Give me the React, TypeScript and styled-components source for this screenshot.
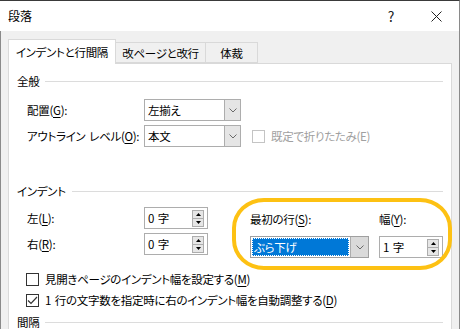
import React from "react";
import styled, { createGlobalStyle } from "styled-components";

const Global = createGlobalStyle`
  html, body { margin: 0; padding: 0; background: #f0f0f0; }
  body {
    font-family: "Noto Sans CJK JP", "Noto Sans", sans-serif;
    font-size: 11.5px;
    letter-spacing: -0.3px;
    word-spacing: 1.5px;
    font-feature-settings: "palt";
    color: #000;
  }
  * { box-sizing: border-box; }
  u { text-underline-offset: 2px; }
`;

const Window = styled.div`
  width: 460px;
  height: 329px;
  overflow: hidden;
  display: flex;
  flex-direction: column;
  border-top: 1px solid #3a3a3a;
  border-right: 1px solid #8a8a8a;
  background: #f0f0f0;
`;

const TitleBar = styled.div`
  height: 30px;
  flex: none;
  background: #fff;
  display: flex;
  align-items: center;
  padding-left: 8px;
`;

const Title = styled.div`
  flex: 1;
  font-size: 12px;
  letter-spacing: 0;
  line-height: 16px;
`;

const TitleButton = styled.div<{ $w: number }>`
  width: ${(p) => p.$w}px;
  height: 30px;
  display: flex;
  align-items: center;
  justify-content: center;
  font-size: 14px;
  color: #222;
`;

const Body = styled.div`
  flex: 1;
  border-left: 1px solid #8a8a8a;
  padding: 8px 0 0 7px;
`;

const Tabs = styled.div`
  display: flex;
  align-items: flex-end;
  height: 24px;
  position: relative;
  z-index: 1;
`;

const Tab = styled.div<{ $active?: boolean; $w: number }>`
  width: ${(p) => p.$w}px;
  height: ${(p) => (p.$active ? 25 : 21)}px;
  background: ${(p) => (p.$active ? "#fff" : "#f0f0f0")};
  border: 1px solid #d9d9d9;
  border-bottom: ${(p) => (p.$active ? "none" : "1px solid #d9d9d9")};
  border-left: ${(p) => (p.$active ? "1px solid #d9d9d9" : "none")};
  margin-bottom: ${(p) => (p.$active ? -1 : 0)}px;
  display: flex;
  align-items: ${(p) => (p.$active ? "flex-start" : "center")};
  padding-top: ${(p) => (p.$active ? 4 : 0)}px;
  justify-content: center;
  line-height: 16px;
  white-space: nowrap;
`;

const Panel = styled.div`
  width: 444px;
  height: 300px;
  background: #fff;
  border: 1px solid #d9d9d9;
  padding: 8px 8px 0 8px;
`;

const SectionHeader = styled.div<{ $mt: number }>`
  display: flex;
  align-items: center;
  height: 18px;
  margin-top: ${(p) => p.$mt}px;
  &::after {
    content: "";
    flex: 1;
    height: 1px;
    background: #dcdcdc;
    margin-left: 6px;
  }
`;

const FieldRow = styled.div<{ $mt: number }>`
  display: flex;
  align-items: center;
  margin-top: ${(p) => p.$mt}px;
  padding-left: 10px;
`;

const Label = styled.div<{ $w?: number; $disabled?: boolean }>`
  width: ${(p) => (p.$w ? `${p.$w}px` : "auto")};
  flex: none;
  white-space: nowrap;
  line-height: 18px;
  color: ${(p) => (p.$disabled ? "#a0a0a0" : "#000")};
`;

const Select = styled.div<{ $w: number; $focus?: boolean }>`
  width: ${(p) => p.$w}px;
  height: 22px;
  border: 1px solid ${(p) => (p.$focus ? "#a0a0a0" : "#adadad")};
  display: flex;
  background: #fff;
  flex: none;
`;

const SelectValue = styled.div<{ $focus?: boolean }>`
  flex: 1;
  line-height: 18px;
  padding-left: ${(p) => (p.$focus ? 2 : 3)}px;
  margin: ${(p) => (p.$focus ? "1px" : "1px 0")};
  background: ${(p) => (p.$focus ? "#0078d7" : "transparent")};
  color: ${(p) => (p.$focus ? "#fff" : "#000")};
  outline: ${(p) => (p.$focus ? "1px dotted #fff" : "none")};
  outline-offset: -1px;
  white-space: nowrap;
`;

const SelectArrow = styled.div<{ $w: number; $focus?: boolean }>`
  width: ${(p) => p.$w}px;
  flex: none;
  background: ${(p) => (p.$focus ? "#dadada" : "#e5e5e5")};
  border-left: 1px solid #adadad;
  display: flex;
  align-items: center;
  justify-content: center;
`;

const Chevron = () => (
  <svg width="8" height="5" viewBox="0 0 8 5">
    <path d="M0.5 0.5 L4 4 L7.5 0.5" fill="none" stroke="#6a6a6a" strokeWidth="1" />
  </svg>
);

const Spin = styled.div`
  width: 64px;
  height: 22px;
  border: 1px solid #adadad;
  background: #fff;
  display: flex;
  align-items: center;
  padding: 0 3px 0 3px;
  flex: none;
`;

const SpinValue = styled.div`
  flex: 1;
  line-height: 18px;
  white-space: pre;
`;

const SpinButtons = styled.div`
  width: 12px;
  height: 17px;
  display: flex;
  flex-direction: column;
  border: 1px solid #adadad;
  background: #e6e6e6;
`;

const SpinBtn = styled.div<{ $top?: boolean }>`
  flex: 1;
  display: flex;
  align-items: center;
  justify-content: center;
  border-top: ${(p) => (p.$top ? "none" : "1px solid #adadad")};
`;

const Tri = ({ up }: { up?: boolean }) => (
  <svg width="5" height="3" viewBox="0 0 5 3">
    <path d={up ? "M0 3 L2.5 0 L5 3 Z" : "M0 0 L2.5 3 L5 0 Z"} fill="#000" />
  </svg>
);

const SpinBox = ({ value }: { value: string }) => (
  <Spin>
    <SpinValue>{value}</SpinValue>
    <SpinButtons>
      <SpinBtn $top>
        <Tri up />
      </SpinBtn>
      <SpinBtn>
        <Tri />
      </SpinBtn>
    </SpinButtons>
  </Spin>
);

const CheckRow = styled.div<{ $mt: number; $pl: number }>`
  display: flex;
  align-items: center;
  margin-top: ${(p) => p.$mt}px;
  padding-left: ${(p) => p.$pl}px;
  line-height: 18px;
`;

const Box = styled.div<{ $disabled?: boolean }>`
  width: 13px;
  height: 13px;
  border: 1px solid ${(p) => (p.$disabled ? "#c4c4c4" : "#333")};
  background: #fff;
  margin-right: 6px;
  flex: none;
  display: flex;
  align-items: center;
  justify-content: center;
`;

const Checkbox = ({ checked, disabled }: { checked?: boolean; disabled?: boolean }) => (
  <Box $disabled={disabled}>
    {checked && (
      <svg width="11" height="9" viewBox="0 0 11 9">
        <path d="M1 4.5 L4 7.5 L10 1" fill="none" stroke="#333" strokeWidth="1.2" />
      </svg>
    )}
  </Box>
);

const OutlineRow = styled.div`
  display: flex;
  align-items: center;
`;

const IndentBody = styled.div`
  display: flex;
  margin-top: 7px;
  height: 51px;
`;

const LeftCol = styled.div`
  display: flex;
  flex-direction: column;
  gap: 4px;
  width: 234px;
`;

const RightCol = styled.div`
  position: relative;
  display: flex;
  gap: 10px;
  padding-top: 3px;
`;

const SubCol = styled.div`
  display: flex;
  flex-direction: column;
  gap: 8px;
`;

const Highlight = styled.div`
  position: absolute;
  left: -18px;
  top: -9px;
  width: 220px;
  height: 72px;
  border: 4px solid #fdc113;
  border-radius: 32px / 30px;
  pointer-events: none;
`;

export default function App() {
  return (
    <>
      <Global />
      <Window>
        <TitleBar>
          <Title>段落</Title>
          <TitleButton $w={44}>?</TitleButton>
          <TitleButton $w={46}>
            <svg width="11" height="11" viewBox="0 0 11 11">
              <path d="M0.5 0.5 L10.5 10.5 M10.5 0.5 L0.5 10.5" stroke="#222" strokeWidth="1" />
            </svg>
          </TitleButton>
        </TitleBar>
        <Body>
          <Tabs>
            <Tab $active $w={108}>インデントと行間隔</Tab>
            <Tab $w={90}>改ページと改行</Tab>
            <Tab $w={52}>体裁</Tab>
          </Tabs>
          <Panel>
            <SectionHeader $mt={0}>全般</SectionHeader>
            <FieldRow $mt={9}>
              <Label $w={117}>
                配置(<u>G</u>):
              </Label>
              <Select $w={97}>
                <SelectValue>左揃え</SelectValue>
                <SelectArrow $w={16}>
                  <Chevron />
                </SelectArrow>
              </Select>
            </FieldRow>
            <FieldRow $mt={4}>
              <Label $w={117}>
                アウトライン レベル(<u>O</u>):
              </Label>
              <OutlineRow>
                <Select $w={97}>
                  <SelectValue>本文</SelectValue>
                  <SelectArrow $w={16}>
                    <Chevron />
                  </SelectArrow>
                </Select>
                <CheckRow $mt={0} $pl={11}>
                  <Checkbox disabled />
                  <Label $disabled>既定で折りたたみ(E)</Label>
                </CheckRow>
              </OutlineRow>
            </FieldRow>

            <SectionHeader $mt={35}>インデント</SectionHeader>
            <IndentBody>
              <LeftCol>
                <FieldRow $mt={0}>
                  <Label $w={117}>
                    左(<u>L</u>):
                  </Label>
                  <SpinBox value="0 字" />
                </FieldRow>
                <FieldRow $mt={0}>
                  <Label $w={117}>
                    右(<u>R</u>):
                  </Label>
                  <SpinBox value="0 字" />
                </FieldRow>
              </LeftCol>
              <RightCol>
                <Highlight />
                <SubCol>
                  <Label>
                    最初の行(<u>S</u>):
                  </Label>
                  <Select $w={119} $focus>
                    <SelectValue $focus>ぶら下げ</SelectValue>
                    <SelectArrow $w={18} $focus>
                      <Chevron />
                    </SelectArrow>
                  </Select>
                </SubCol>
                <SubCol>
                  <Label>
                    幅(<u>Y</u>):
                  </Label>
                  <SpinBox value="1 字" />
                </SubCol>
              </RightCol>
            </IndentBody>
            <CheckRow $mt={12} $pl={9}>
              <Checkbox />
              <Label>
                見開きページのインデント幅を設定する(<u>M</u>)
              </Label>
            </CheckRow>
            <CheckRow $mt={3} $pl={9}>
              <Checkbox checked />
              <Label>
                1 行の文字数を指定時に右のインデント幅を自動調整する(<u>D</u>)
              </Label>
            </CheckRow>
            <SectionHeader $mt={4}>間隔</SectionHeader>
          </Panel>
        </Body>
      </Window>
    </>
  );
}
